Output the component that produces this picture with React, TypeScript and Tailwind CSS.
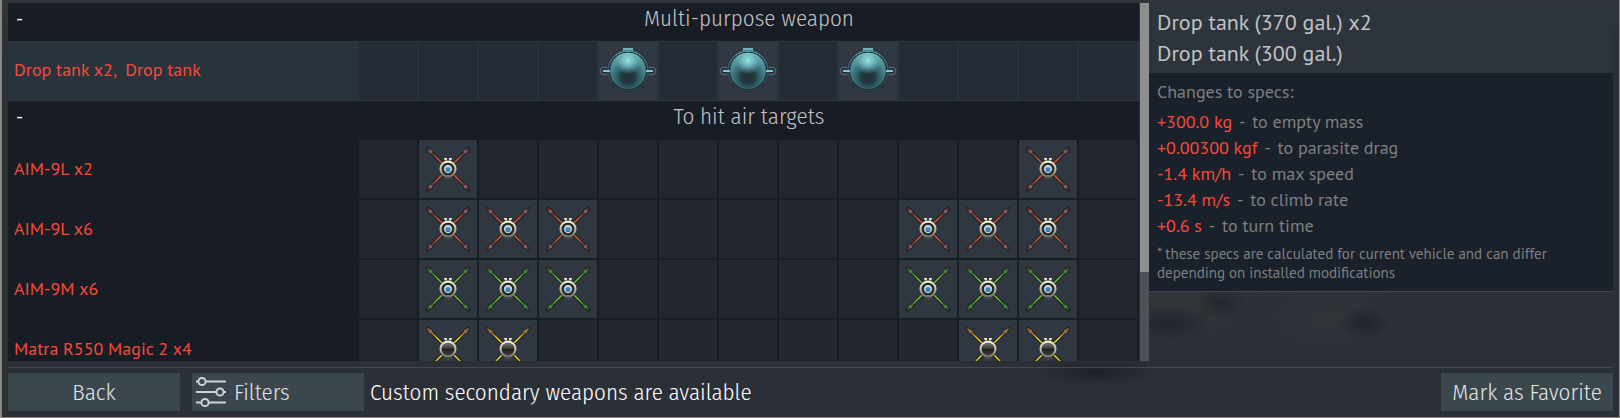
import React, { useId } from 'react';

type Finish = 'red' | 'green' | 'yellow';
type SlotIcon = 'tank' | Finish;

interface Weapon {
  name: string;
  icon: SlotIcon;
  slots: number[];
  selected?: boolean;
}

interface Section {
  title: string;
  weapons: Weapon[];
}

interface Spec {
  value: string;
  label: string;
}

const PYLONS = Array.from({ length: 13 }, (_, i) => i);

const sections: Section[] = [
  {
    title: 'Multi-purpose weapon',
    weapons: [
      { name: 'Drop tank x2,\u00a0 Drop tank', icon: 'tank', slots: [4, 6, 8], selected: true },
    ],
  },
  {
    title: 'To hit air targets',
    weapons: [
      { name: 'AIM-9L x2', icon: 'red', slots: [1, 11] },
      { name: 'AIM-9L x6', icon: 'red', slots: [1, 2, 3, 9, 10, 11] },
      { name: 'AIM-9M x6', icon: 'green', slots: [1, 2, 3, 9, 10, 11] },
      { name: 'Matra R550 Magic 2 x4', icon: 'yellow', slots: [1, 2, 10, 11] },
    ],
  },
];

const specs: Spec[] = [
  { value: '+300.0 kg', label: 'to empty mass' },
  { value: '+0.00300 kgf', label: 'to parasite drag' },
  { value: '-1.4 km/h', label: 'to max speed' },
  { value: '-13.4 m/s', label: 'to climb rate' },
  { value: '+0.6 s', label: 'to turn time' },
];

const finColors: Record<Finish, { inner: string; outer: string; knob: string }> = {
  red: { inner: '#e8602f', outer: '#7a3833', knob: '#805a58' },
  green: { inner: '#6fd636', outer: '#328c1e', knob: '#4a7d3c' },
  yellow: { inner: '#ffe81c', outer: '#c07a20', knob: '#937048' },
};

const knobs = [[11.5, 11.5], [46.5, 11.5], [11.5, 46.5], [46.5, 46.5]];

const TankIcon: React.FC = () => {
  const id = useId();
  return (
    <svg viewBox="0 0 58 58" className="block size-[58px]" aria-hidden="true">
      <defs>
        <radialGradient id={`${id}b`} cx="0.5" cy="0.68" r="0.7">
          <stop offset="0" stopColor="#1d2f35" />
          <stop offset="0.25" stopColor="#22393f" />
          <stop offset="0.5" stopColor="#35666f" />
          <stop offset="0.75" stopColor="#4c8e98" />
          <stop offset="1" stopColor="#62aab3" />
        </radialGradient>
        <radialGradient id={`${id}s`} cx="0.5" cy="0.2" r="0.4">
          <stop offset="0" stopColor="#9ae6e8" stopOpacity="0.95" />
          <stop offset="0.4" stopColor="#86d2d8" stopOpacity="0.7" />
          <stop offset="1" stopColor="#68b5bd" stopOpacity="0" />
        </radialGradient>
        <linearGradient id={`${id}r`} x1="0" y1="0" x2="0" y2="1">
          <stop offset="0" stopColor="#5694a0" />
          <stop offset="0.5" stopColor="#3d5963" />
          <stop offset="1" stopColor="#2f3b4d" />
        </linearGradient>
        <linearGradient id={`${id}e`} x1="0" y1="0" x2="0" y2="1">
          <stop offset="0" stopColor="#94dbe0" />
          <stop offset="0.4" stopColor="#3b6a72" />
          <stop offset="1" stopColor="#2f6067" />
        </linearGradient>
      </defs>
      <rect x="1.5" y="25.5" width="55" height="7" rx="3.5" fill="#252d37" stroke="#53647a" strokeWidth="1.4" />
      <circle cx="29" cy="29" r="21" fill="#252d35" />
      <circle cx="29" cy="29" r="20" fill="#1f2a31" stroke={`url(#${id}r)`} strokeWidth="1.3" />
      <path d="M24 6h10v4H24z" fill="#4f8f9a" />
      <path d="M24 6h10v1.5H24z" fill="#73bac4" />
      <path d="M4 28h8v2H4zM46 28h8v2h-8z" fill="#7cc8d1" />
      <circle cx="29" cy="29" r="17.8" fill={`url(#${id}b)`} stroke={`url(#${id}e)`} strokeWidth="1" />
      <circle cx="29" cy="29" r="17" fill={`url(#${id}s)`} />
    </svg>
  );
};

const MissileIcon: React.FC<{ finish: Finish }> = ({ finish }) => {
  const id = useId();
  const { inner, outer, knob } = finColors[finish];
  return (
    <svg viewBox="0 0 58 58" className="block size-[58px]" aria-hidden="true">
      <defs>
        <linearGradient id={`${id}r`} x1="0" y1="0" x2="0" y2="1">
          <stop offset="0" stopColor="#f6f2da" />
          <stop offset="0.5" stopColor="#b9b8a8" />
          <stop offset="1" stopColor="#73766f" />
        </linearGradient>
        <radialGradient id={`${id}f`} gradientUnits="userSpaceOnUse" cx="29" cy="29" r="28">
          <stop offset="0.5" stopColor={inner} />
          <stop offset="0.8" stopColor={outer} />
        </radialGradient>
        <linearGradient id={`${id}d`} x1="0" y1="0" x2="0" y2="1">
          <stop offset="0" stopColor="#777775" />
          <stop offset="0.45" stopColor="#3a3a38" />
          <stop offset="0.55" stopColor="#1b1b1a" />
          <stop offset="1" stopColor="#444440" />
        </linearGradient>
      </defs>
      <path d="M8.5 8.5l41 41M49.5 8.5l-41 41" stroke="#1b1d20" strokeWidth="3.4" strokeLinecap="round" opacity="0.75" />
      {knobs.map(([x, y]) => (
        <circle key={`${x}-${y}`} cx={x} cy={y} r="2.7" fill="#1d2024" />
      ))}
      <path d="M8.5 8.5l41 41M49.5 8.5l-41 41" stroke={`url(#${id}f)`} strokeWidth="1.3" />
      {knobs.map(([x, y]) => (
        <circle key={`${x}-${y}`} cx={x} cy={y} r="1.9" fill={knob} />
      ))}
      <path d="M25 18h3v3h-2v-1.5h-1zM33 18h-3v3h2v-1.5h1z" fill="#e9e4c8" />
      <path d="M26 37h1.5v2H26zM28.5 37H30v2.5h-1.5zM31 37h1.5v2H31z" fill="#55565a" />
      <circle cx="29" cy="29" r="9" fill="#20221f" />
      <circle cx="29" cy="29" r="7.4" fill="none" stroke={`url(#${id}r)`} strokeWidth="2.4" />
      {finish === 'yellow' ? (
        <circle cx="29" cy="29" r="6.2" fill={`url(#${id}d)`} />
      ) : (
        <>
          <circle cx="29" cy="29" r="6.2" fill="#23251f" />
          <circle cx="29" cy="29" r="4.2" fill="#c4c9d4" />
          <rect x="26.7" y="27.5" width="4.6" height="4.4" rx="1.2" fill="#3188b8" />
        </>
      )}
    </svg>
  );
};

const FiltersIcon: React.FC = () => (
  <svg viewBox="0 0 30 30" className="size-[30px] shrink-0" fill="none" stroke="#cdd1d2" strokeWidth="2" aria-hidden="true">
    <path d="M0 4.5h2M10 4.5h20M0 15h20M28 15h2M0 25.5h5M13 25.5h17" />
    <circle cx="6" cy="4.5" r="3.6" />
    <circle cx="24" cy="15" r="3.6" />
    <circle cx="9" cy="25.5" r="3.6" />
  </svg>
);

const WeaponRow: React.FC<{ weapon: Weapon }> = ({ weapon }) => {
  const { name, icon, slots, selected } = weapon;
  return (
    <tr className={selected ? 'bg-[#29333b]' : ''}>
      <th
        scope="row"
        className={`h-[60px] p-0 pb-1 pl-1.5 text-left text-[18px] font-normal text-[#f94839] ${
          selected ? 'border-y border-[#30363b]' : ''
        }`}
      >
        {name}
      </th>
      {PYLONS.map((i) => {
        const filled = slots.includes(i);
        const border = selected
          ? 'border-y border-r-2 border-y-[#30363b] border-r-[#29333b]'
          : 'border-r-2 border-b-2 border-[#181c24]';
        const fill = filled ? 'bg-[#303740]' : selected ? 'bg-[#242b34]' : 'bg-[#22262e]';
        return (
          <td key={i} className={`h-[60px] p-0 ${border} ${fill}`}>
            {filled && (icon === 'tank' ? <TankIcon /> : <MissileIcon finish={icon} />)}
          </td>
        );
      })}
    </tr>
  );
};

const WeaponTable: React.FC = () => (
  <div className="min-w-0 flex-1 overflow-hidden bg-[#181c24]">
    <table className="w-full table-fixed border-separate border-spacing-0">
      <colgroup>
        <col />
        {PYLONS.map((i) => (
          <col key={i} className="w-[60px]" />
        ))}
      </colgroup>
      {sections.map((section, index) => (
        <tbody key={section.title}>
          <tr>
            <th className={`p-0 text-left align-top ${index === 0 ? 'h-[38px]' : 'h-[39px]'}`}>
              <button
                type="button"
                aria-label={`Collapse ${section.title}`}
                className="block px-2 text-[20px] leading-[30px] font-normal text-white"
              >
                -
              </button>
            </th>
            <th
              colSpan={PYLONS.length}
              className="p-0 align-top font-['Fira_Sans_Condensed','Open_Sans',sans-serif] text-[23px] leading-[30px] font-light text-[#c0c2c3]"
            >
              {section.title}
            </th>
          </tr>
          {section.weapons.map((weapon) => (
            <WeaponRow key={weapon.name} weapon={weapon} />
          ))}
        </tbody>
      ))}
    </table>
  </div>
);

const SpecsPanel: React.FC = () => (
  <aside className="w-[464px] shrink-0 bg-[radial-gradient(ellipse_26px_16px_at_215px_320px,#1f232a,transparent),radial-gradient(ellipse_45px_18px_at_20px_320px,#20242b,transparent),radial-gradient(ellipse_26px_16px_at_72px_300px,#23272d,transparent),radial-gradient(ellipse_100px_50px_at_30px_300px,#31363a,transparent),radial-gradient(ellipse_80px_40px_at_180px_315px,#30353a,transparent)]">
    <h2 className="bg-[#2e343b] px-2 pt-1 pb-1 text-[22px] leading-[31px] text-[#c0c2c3]">
      Drop tank (370 gal.) x2
      <br />
      Drop tank (300 gal.)
    </h2>
    <div className="border-b border-[#3f464c] bg-[#1a212a] px-2 pt-1.5 pb-2 text-[18px] leading-[26px] text-[#7e7f81]">
      <p className="mb-1">Changes to specs:</p>
      <ul>
        {specs.map(({ value, label }) => (
          <li key={label}>
            <span className="text-[#f94839]">{value}</span> <span className="mx-0.5">-</span> {label}
          </li>
        ))}
      </ul>
      <p className="mt-1 pt-px pr-8 pb-px text-[15px] leading-[19px]">
        * these specs are calculated for current vehicle and can differ depending on installed modifications
      </p>
    </div>
  </aside>
);

const Footer: React.FC = () => (
  <footer className="mt-1.5 flex items-center border-t border-[#43494c] pt-[5px] pb-1.5 font-['Fira_Sans_Condensed','Open_Sans',sans-serif] text-[23px] leading-[38px] font-light text-[#e0e3e4]">
    <button type="button" className="w-[172px] bg-[#3b464d]">
      Back
    </button>
    <button type="button" className="ml-3 flex w-[172px] items-center gap-2 bg-[#3b464d] pl-1">
      <FiltersIcon />
      Filters
    </button>
    <p className="ml-1.5 text-white">Custom secondary weapons are available</p>
    <button type="button" className="ml-auto w-[172px] bg-[#3b464d] whitespace-nowrap">
      Mark as Favorite
    </button>
  </footer>
);

const App: React.FC = () => (
  <div className="flex h-screen bg-[#8d8982] pr-px pb-px pl-0.5 font-['PT_Sans','Open_Sans',sans-serif]">
    <div className="flex min-w-0 flex-1 flex-col bg-[#2b2f36] bg-[radial-gradient(ellipse_60px_14px_at_1095px_372px,#1c2129,transparent),linear-gradient(#32363c,#2b2f36_12%)] px-1.5 pt-[3px]">
      <main className="flex min-h-0 flex-1">
        <WeaponTable />
        <div className="ml-px flex w-[9px] shrink-0 flex-col bg-[#4d5155]">
          <div className="h-3/4 bg-[#8f8f8f]" />
        </div>
        <SpecsPanel />
      </main>
      <Footer />
    </div>
  </div>
);

export default App;
